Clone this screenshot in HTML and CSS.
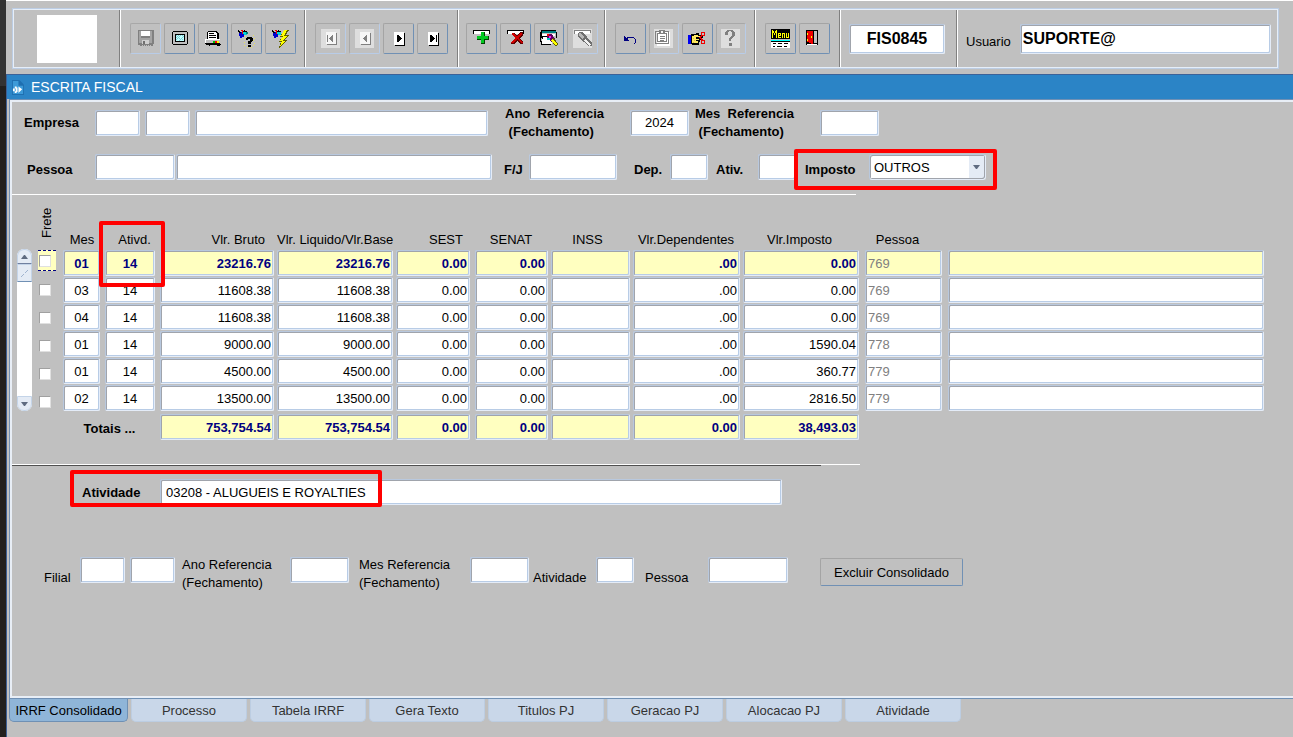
FILE: index.html
```html
<!DOCTYPE html>
<html lang="pt-br">
<head>
	<title>Escrita Fiscal - FIS0845</title>
	<meta charset="utf-8">
	<link rel="stylesheet" href="styles.css">
</head>
<body>
	<div class="edge"></div>
	<div class="app">
		<!--Toolbar-->
		<header class="toolbar">
			<div class="group logo-group"><div class="logo"></div></div>
			<div class="group file-group">
				<button class="tool off" title="Salvar">
					<svg viewBox="0 0 19 19"><path fill="#808080" d="M2 1h16v14h-1v2h-2v-1h-1v1h-1v-1h-1v1h-1v-1h-1v1H9v-1H8v1H7v-1H6v1H4v-1H2z"/><path fill="#a4a4a4" d="M3 2h2v7h9V2h2v12H3z"/><path fill="#fff" d="M5 2h9v5H5z"/><path fill="#d0d0d0" d="M6 11h7v4H6z"/><path fill="#707070" d="M7 12h2v3H7z"/></svg>
				</button>
				<button class="tool" title="Tela">
					<svg viewBox="0 0 19 19"><path fill="#000" d="M3 2h14v1h1v12h-1v1H3v-1H2V3h1z"/><path fill="#c0c0c0" d="M3 3h14v12H3z"/><path fill="#000" d="M5 5h10v8H5z"/><path fill="#c0ffff" d="M6 6h8v6H6z"/><path fill="#80d0d8" d="M6 6h1v1H6zm2 0h1v1H8zm2 0h1v1h-1zm2 0h1v1h-1zM7 7h1v1H7zm2 0h1v1H9zm4 0h1v1h-1zM6 8h1v1H6zm2 0h1v1H8zm4 0h1v1h-1zM7 9h1v1H7zm2 0h1v1H9zm2 0h1v1h-1zm-5 1h1v1H6zm4 0h1v1h-1zm2 0h1v1h-1zm-3 1h1v1H9z"/></svg>
				</button>
				<button class="tool" title="Imprimir">
					<svg viewBox="0 0 19 19"><path fill="#000" d="M5 2h9v1h1v1h1v6H4V3h1z"/><path fill="#fff" d="M5 3h8v1h1v6H5zM2 10h15v4H2z"/><path fill="#000" d="M6 4h5v1H6zm0 2h7v1H6zm0 2h7v1H6z"/><path fill="#c0c0c0" d="M3 11h14v4H3z"/><path fill="#00c000" d="M10 12h2v2h-2z"/><path fill="#f00" d="M12 12h2v2h-2z"/><path fill="#ff0" d="M14 12h2v2h-2z"/><path fill="#000" d="M17 10h1v5H3v1h3v1h1v-1h7v1h3v-1h1v-6zM2 14h15v1H2z"/></svg>
				</button>
				<button class="tool" title="Entrar consulta">
					<svg viewBox="0 0 19 19"><path fill="#0000d0" d="M2 3h3v1h2v4H5v1H3V7H2z"/><path fill="#000" d="M1 1h1v1h1v1h1v1H2V3H1zM6 2h1V1h1v1h2v1H6z"/><path fill="#00d8d8" d="M6 3h4v3H7V5H6z"/><path fill="#008080" d="M9 3h2v2H9z"/><path fill="#f00000" d="M4 1h2v1H4zm1 1h1v3H5z"/><path fill="#e8e060" d="M8 7h1v1H8zm8-1h1v1h-1zm1 3h1v1h-1zm-1 2h1v1h-1zm1 3h1v1h-1zm-1 2h1v1h-1zM7 10h1v1H7zm0 3h1v1H7zm0 3h1v1H7zm3 2h1v1h-1zm4 0h1v1h-1z"/><path fill="#000" d="M10 8h5v1h1v3h-1v1h-1v2h-3v-3h2v-2h-2v1H9V9h1zm1 8h3v2h-3z"/></svg>
				</button>
				<button class="tool" title="Executar consulta">
					<svg viewBox="0 0 19 19"><path fill="#0000d0" d="M2 3h3v1h2v4H5v1H3V7H2z"/><path fill="#000" d="M1 1h1v1h1v1h1v1H2V3H1zM6 2h1V1h1v1h2v1H6z"/><path fill="#00d8d8" d="M6 3h4v3H7V5H6z"/><path fill="#f00000" d="M4 1h2v1H4zm1 1h1v3H5z"/><path fill="#606000" d="M13 1h5l-3 5h3l-4 5h2L8 19l2-6H8l3-5H9z"/><path fill="#ff0" d="M13 1h3l-3 6h3l-4 5h2l-5 5 2-5H9l3-5h-2z"/></svg>
				</button>
			</div>
			<div class="group nav-group">
				<button class="tool off" title="Primeiro">
					<svg viewBox="0 0 19 19"><path fill="#dedede" d="M0 0h19v19H0z"/><path fill="#808080" d="M6 4h10v12H6z"/><path fill="#f6f6f6" d="M5 3h10v12H5z"/><path fill="#808080" d="M6 6h1v7H6zm5 0h1v7h-1v-1h-1v-1H9v-1H8V9h1V8h1V7h1z"/></svg>
				</button>
				<button class="tool off" title="Anterior">
					<svg viewBox="0 0 19 19"><path fill="#dedede" d="M0 0h19v19H0z"/><path fill="#808080" d="M6 4h10v12H6z"/><path fill="#f6f6f6" d="M5 3h10v12H5z"/><path fill="#808080" d="M11 6h1v7h-1v-1h-1v-1H9v-1H8V9h1V8h1V7h1z"/></svg>
				</button>
				<button class="tool" title="Proximo">
					<svg viewBox="0 0 19 19"><path fill="#000" d="M6 4h10v13H6z"/><path fill="#fff" d="M5 3h10v13H5z"/><path fill="#000" d="M8 6h2v1h1v1h1v1h1v1h-1v1h-1v1h-1v1H8z"/></svg>
				</button>
				<button class="tool" title="Ultimo">
					<svg viewBox="0 0 19 19"><path fill="#000" d="M6 4h10v13H6z"/><path fill="#fff" d="M5 3h10v13H5z"/><path fill="#000" d="M7 6h2v1h1v1h1v1h1v1h-1v1h-1v1H9v1H7zm6 0h1v7h-1z"/></svg>
				</button>
			</div>
			<div class="group edit-group">
				<button class="tool" title="Inserir">
					<svg viewBox="0 0 19 19"><path fill="#000" d="M1 1h17v4h-1V2H2v3H1z"/><path fill="#fff" d="M2 2h15v3H2z"/><path fill="#004000" d="M9 3h4v4h4v4h-4v4H9v-4H5V7h4z"/><path fill="#00c820" d="M9 3h3v4h4v3h-4v4H9v-4H5V7h4z"/></svg>
				</button>
				<button class="tool" title="Excluir">
					<svg viewBox="0 0 19 19"><path fill="#000" d="M1 1h17v4h-1V2H2v3H1z"/><path fill="#fff" d="M2 2h15v3H2z"/><path fill="#600000" d="M6 4h3l2 3 3-4h3v3l-3 3 3 4v2h-3l-3-3-3 3H5v-2l4-4-3-3z"/><path fill="#d00000" d="M6 4h2l3 4 3-4h2v1l-3 4 4 5h-2l-4-4-4 4H5l4-5-3-4z"/></svg>
				</button>
				<button class="tool" title="Bloquear">
					<svg viewBox="0 0 19 19"><path fill="#000" d="M2 1h15v2h1v6h-1V4H3v5H1V3h1z"/><path fill="#008080" d="M3 2h14v2H3z"/><path fill="#fff" d="M3 5h13v2H3zM3 8h10v7H3z"/><path fill="#000" d="M3 7h5v1H4v2H3zM1 9h1v3h1v3h9v1H2v-3H1z"/><path fill="#600060" d="M8 5h5l3 5-3 3-5-4z"/><path fill="#f00000" d="M8 5h2v2H8z"/><path fill="#ff20ff" d="M10 7h2v2h-2z"/><path fill="#00c8c8" d="M8 9h3v2H8z"/><path fill="#606000" d="M12 11l3-2 4 6-1 2h-2z"/><path fill="#ff0" d="M12 11l2-1 4 5-1 1h-1z"/></svg>
				</button>
				<button class="tool off" title="Limpar">
					<svg viewBox="0 0 19 19"><path fill="#dedede" d="M0 0h19v19H0z"/><path fill="#808080" d="M1 1h17v3h-1V3H3v2H1z"/><path fill="#fff" d="M2 2h15v3H2z"/><path fill="#707070" d="M6 3h4l9 11v3h-3L5 8V4z"/><path fill="#b8b8b8" d="M6 4l3 1 2 3-2 2-3-3z"/><path fill="#f0f0f0" d="M12 10l6 5-1 2-6-5z"/></svg>
				</button>
			</div>
			<div class="group misc-group">
				<button class="tool" title="Desfazer">
					<svg viewBox="0 0 19 19"><path fill="none" stroke="#000080" stroke-width="1" d="M5 10l3-2h4l2 2v4l-1 1"/><path fill="#000080" d="M3 7h1v1h1v1h1v1h1v1h1v1H3z"/></svg>
				</button>
				<button class="tool off" title="Lista">
					<svg viewBox="0 0 19 19"><path fill="#dedede" d="M0 0h19v19H0z"/><path fill="#fff" d="M3 3h13v14H3z"/><path fill="#808080" fill-rule="evenodd" d="M1 2h4V1h6v1h4v13H1zm1 1v11h12V3zM3 4h10v9H3zm1 1v7h8V5z"/><path fill="#808080" d="M5 2h6v3H5zM6 7h5v1H6zm0 2h5v1H6zm0 2h4v1H6z"/><path fill="#f4f4f4" d="M7 2h2v2H7z"/></svg>
				</button>
				<button class="tool" title="Editar">
					<svg viewBox="0 0 19 19"><path fill="#0000f0" d="M0 6h3v9H0z"/><path fill="#000" d="M3 5h5V4h3v2h4v3h-2v2h-1v2h-1v3H4v-1H3z"/><path fill="#ffe860" d="M4 7h2V6h4v1h4v1H8v2h3v1H8v1h2v2H4z"/><path fill="#d8c040" d="M5 9h1v1H5zm1 2h1v1H6zM5 13h1v1H5z"/><path fill="none" stroke="#f00000" d="M14 3h2v3h-3V4zm0 8h2v3h-3v-2zM11 9l4-3M12 8l3 4"/></svg>
				</button>
				<button class="tool off" title="Ajuda">
					<svg viewBox="0 0 19 19"><path fill="#dedede" d="M0 0h19v19H0z"/><path fill="#808080" d="M6 1h6v1h1v1h1v4h-1v1h-1v1h-1v1h-1v2H8V9h1V8h1V7h1V3h-1V2H8v1H7v3H4V3h1V2h1zm2 13h3v3H8z"/></svg>
				</button>
			</div>
			<div class="group menu-group">
				<button class="tool" title="Menu">
					<svg viewBox="0 0 19 19"><path fill="#000" d="M0 0h19v10H0z"/><path fill="#ff0" d="M1 1h1v1h1v2h1V2h1V1h1v8H5V4H4v2H3V4H2v5H1zm6 3h3v3H8v1h2v1H7zm1 1v1h1V5zm3-1h3v5h-1V5h-1v4h-1zm4 0h1v4h1V4h1v5h-3z"/><path fill="#00ffff" d="M0 11h19v1H0z"/><path fill="#fff" d="M0 13h19v6H0z"/><path fill="#000" d="M0 12h19v1H0zm2 2h3v1H2zm5 0h4v1H7zm6 0h4v1h-4zM2 17h2v1H2zm4 0h5v1H6zm7 0h3v1h-3z"/></svg>
				</button>
				<button class="tool" title="Sair">
					<svg viewBox="0 0 19 19"><path fill="#000" d="M1 1h12v15H1z"/><path fill="#c0c0c0" d="M9 2h3v12H9z"/><path fill="#fff" d="M2 15h10v1H2z"/><path fill="#f00000" d="M2 2h6v13H6v-1H4v-1H2z"/><path fill="#ff0" d="M2 4h1v2H2zm0 6h1v2H2zm4-3h1v2H6z"/></svg>
				</button>
			</div>
			<div class="group code-group">
				<input type="text" class="field code" value="FIS0845" aria-label="Programa">
			</div>
			<div class="group user-group">
				<label for="usuario">Usuario</label>
				<input type="text" class="field user" id="usuario" value="SUPORTE@">
			</div>
		</header>

		<!--Window-->
		<main class="window">
			<h1>
				<svg viewBox="0 0 13 16"><path fill="#1f6fb0" d="M0 0h8l5 5v11H0z"/><path fill="#3d9ad8" d="M1 1h6v5h5v9H1z"/><path fill="#1f6fb0" d="M8 1l4 4H8z"/><path fill="#fff" d="M3 7h2v1h1v5H5v1H3v-2H1v-3h2zm1 2H3v3h1zM7 7l4 3-4 4z"/></svg>
				ESCRITA FISCAL
			</h1>
			<div class="panel">
				<div class="row filter">
					<label class="l-first" for="empresa">Empresa</label>
					<input type="text" class="field w45 gap" id="empresa">
					<input type="text" class="field w45 gap" aria-label="Filial da empresa">
					<input type="text" class="field w293" aria-label="Nome da empresa">
					<label class="l-ano" for="ano">Ano  Referencia
 (Fechamento)</label>
					<input type="text" class="field w59 center" id="ano" value="2024">
					<label class="l-mes" for="mes">Mes  Referencia
 (Fechamento)</label>
					<input type="text" class="field w59" id="mes">
				</div>
				<div class="row filter second">
					<label class="l-first indent" for="pessoa">Pessoa</label>
					<input type="text" class="field w80" id="pessoa">
					<input type="text" class="field w316" aria-label="Nome da pessoa">
					<label class="l-fj" for="fj">F/J</label>
					<input type="text" class="field w88" id="fj">
					<label class="l-dep" for="dep">Dep.</label>
					<input type="text" class="field w38" id="dep">
					<label class="l-ativ" for="ativ">Ativ.</label>
					<input type="text" class="field w38" id="ativ">
					<div class="imposto">
						<label for="imposto">Imposto</label>
						<div class="combo">
							<select id="imposto"><option>OUTROS</option></select>
							<svg viewBox="0 0 7 4"><path fill="#5f6b80" d="M0 0h7L4 4H3z"/></svg>
						</div>
						<span class="mark"></span>
					</div>
				</div>
				<hr class="line">

				<!--Records-->
				<div class="records">
					<div class="scroll">
						<button class="up" aria-label="Subir"><svg viewBox="0 0 7 4"><path fill="#5f6b80" d="M3 0h1l3 4H0z"/></svg></button>
						<span class="thumb"><svg viewBox="0 0 7 7"><path fill="none" stroke="#a0b4d0" d="M0 7l3-3M4 3l3-3"/></svg></span>
						<button class="down" aria-label="Descer"><svg viewBox="0 0 7 4"><path fill="#5f6b80" d="M0 0h7L4 4H3z"/></svg></button>
					</div>
					<div class="frete">
						<span class="frete-title" id="frete">Frete</span>
						<div class="check current"><input type="checkbox" aria-labelledby="frete"></div>
						<div class="check"><input type="checkbox" aria-labelledby="frete"></div>
						<div class="check"><input type="checkbox" aria-labelledby="frete"></div>
						<div class="check"><input type="checkbox" aria-labelledby="frete"></div>
						<div class="check"><input type="checkbox" aria-labelledby="frete"></div>
						<div class="check"><input type="checkbox" aria-labelledby="frete"></div>
					</div>
					<table>
						<colgroup>
							<col class="c-mes"><col class="c-ativd"><col class="c-bruto"><col class="c-liquido"><col class="c-sest"><col class="c-senat"><col class="c-inss"><col class="c-dep"><col class="c-imp"><col class="c-pessoa"><col>
						</colgroup>
						<thead>
							<tr>
								<th>Mes</th>
								<th class="ativd">Ativd.<span class="mark"></span></th>
								<th class="right">Vlr. Bruto</th>
								<th>Vlr. Liquido/Vlr.Base</th>
								<th class="right">SEST</th>
								<th>SENAT</th>
								<th class="back">INSS</th>
								<th>Vlr.Dependentes</th>
								<th class="back">Vlr.Imposto</th>
								<th class="person">Pessoa</th>
								<th></th>
							</tr>
						</thead>
						<tbody>
							<tr class="current">
								<td><input type="text" class="field center" aria-label="Mes" value="01"></td>
								<td><input type="text" class="field center" aria-label="Ativd." value="14"></td>
								<td><input type="text" class="field" aria-label="Vlr. Bruto" value="23216.76"></td>
								<td><input type="text" class="field" aria-label="Vlr. Liquido" value="23216.76"></td>
								<td><input type="text" class="field" aria-label="SEST" value="0.00"></td>
								<td><input type="text" class="field" aria-label="SENAT" value="0.00"></td>
								<td><input type="text" class="field" aria-label="INSS"></td>
								<td><input type="text" class="field" aria-label="Vlr.Dependentes" value=".00"></td>
								<td><input type="text" class="field" aria-label="Vlr.Imposto" value="0.00"></td>
								<td><input type="text" class="field person" aria-label="Pessoa" value="769"></td>
								<td><input type="text" class="field" aria-label="Nome"></td>
							</tr>
							<tr>
								<td><input type="text" class="field center" aria-label="Mes" value="03"></td>
								<td><input type="text" class="field center" aria-label="Ativd." value="14"></td>
								<td><input type="text" class="field" aria-label="Vlr. Bruto" value="11608.38"></td>
								<td><input type="text" class="field" aria-label="Vlr. Liquido" value="11608.38"></td>
								<td><input type="text" class="field" aria-label="SEST" value="0.00"></td>
								<td><input type="text" class="field" aria-label="SENAT" value="0.00"></td>
								<td><input type="text" class="field" aria-label="INSS"></td>
								<td><input type="text" class="field" aria-label="Vlr.Dependentes" value=".00"></td>
								<td><input type="text" class="field" aria-label="Vlr.Imposto" value="0.00"></td>
								<td><input type="text" class="field person" aria-label="Pessoa" value="769"></td>
								<td><input type="text" class="field" aria-label="Nome"></td>
							</tr>
							<tr>
								<td><input type="text" class="field center" aria-label="Mes" value="04"></td>
								<td><input type="text" class="field center" aria-label="Ativd." value="14"></td>
								<td><input type="text" class="field" aria-label="Vlr. Bruto" value="11608.38"></td>
								<td><input type="text" class="field" aria-label="Vlr. Liquido" value="11608.38"></td>
								<td><input type="text" class="field" aria-label="SEST" value="0.00"></td>
								<td><input type="text" class="field" aria-label="SENAT" value="0.00"></td>
								<td><input type="text" class="field" aria-label="INSS"></td>
								<td><input type="text" class="field" aria-label="Vlr.Dependentes" value=".00"></td>
								<td><input type="text" class="field" aria-label="Vlr.Imposto" value="0.00"></td>
								<td><input type="text" class="field person" aria-label="Pessoa" value="769"></td>
								<td><input type="text" class="field" aria-label="Nome"></td>
							</tr>
							<tr>
								<td><input type="text" class="field center" aria-label="Mes" value="01"></td>
								<td><input type="text" class="field center" aria-label="Ativd." value="14"></td>
								<td><input type="text" class="field" aria-label="Vlr. Bruto" value="9000.00"></td>
								<td><input type="text" class="field" aria-label="Vlr. Liquido" value="9000.00"></td>
								<td><input type="text" class="field" aria-label="SEST" value="0.00"></td>
								<td><input type="text" class="field" aria-label="SENAT" value="0.00"></td>
								<td><input type="text" class="field" aria-label="INSS"></td>
								<td><input type="text" class="field" aria-label="Vlr.Dependentes" value=".00"></td>
								<td><input type="text" class="field" aria-label="Vlr.Imposto" value="1590.04"></td>
								<td><input type="text" class="field person" aria-label="Pessoa" value="778"></td>
								<td><input type="text" class="field" aria-label="Nome"></td>
							</tr>
							<tr>
								<td><input type="text" class="field center" aria-label="Mes" value="01"></td>
								<td><input type="text" class="field center" aria-label="Ativd." value="14"></td>
								<td><input type="text" class="field" aria-label="Vlr. Bruto" value="4500.00"></td>
								<td><input type="text" class="field" aria-label="Vlr. Liquido" value="4500.00"></td>
								<td><input type="text" class="field" aria-label="SEST" value="0.00"></td>
								<td><input type="text" class="field" aria-label="SENAT" value="0.00"></td>
								<td><input type="text" class="field" aria-label="INSS"></td>
								<td><input type="text" class="field" aria-label="Vlr.Dependentes" value=".00"></td>
								<td><input type="text" class="field" aria-label="Vlr.Imposto" value="360.77"></td>
								<td><input type="text" class="field person" aria-label="Pessoa" value="779"></td>
								<td><input type="text" class="field" aria-label="Nome"></td>
							</tr>
							<tr>
								<td><input type="text" class="field center" aria-label="Mes" value="02"></td>
								<td><input type="text" class="field center" aria-label="Ativd." value="14"></td>
								<td><input type="text" class="field" aria-label="Vlr. Bruto" value="13500.00"></td>
								<td><input type="text" class="field" aria-label="Vlr. Liquido" value="13500.00"></td>
								<td><input type="text" class="field" aria-label="SEST" value="0.00"></td>
								<td><input type="text" class="field" aria-label="SENAT" value="0.00"></td>
								<td><input type="text" class="field" aria-label="INSS"></td>
								<td><input type="text" class="field" aria-label="Vlr.Dependentes" value=".00"></td>
								<td><input type="text" class="field" aria-label="Vlr.Imposto" value="2816.50"></td>
								<td><input type="text" class="field person" aria-label="Pessoa" value="779"></td>
								<td><input type="text" class="field" aria-label="Nome"></td>
							</tr>
						</tbody>
						<tfoot>
							<tr class="current">
								<th colspan="2">Totais ...</th>
								<td><input type="text" class="field" aria-label="Total Bruto" value="753,754.54"></td>
								<td><input type="text" class="field" aria-label="Total Liquido" value="753,754.54"></td>
								<td><input type="text" class="field" aria-label="Total SEST" value="0.00"></td>
								<td><input type="text" class="field" aria-label="Total SENAT" value="0.00"></td>
								<td><input type="text" class="field" aria-label="Total INSS"></td>
								<td><input type="text" class="field" aria-label="Total Dependentes" value="0.00"></td>
								<td><input type="text" class="field" aria-label="Total Imposto" value="38,493.03"></td>
								<td></td>
								<td></td>
							</tr>
						</tfoot>
					</table>
				</div>
				<hr class="line bottom">
				<hr class="line dark">

				<div class="row activity">
					<label for="atividade">Atividade</label>
					<input type="text" class="field" id="atividade" value="03208 - ALUGUEIS E ROYALTIES">
					<span class="mark"></span>
				</div>

				<!--Delete consolidated-->
				<div class="row delete">
					<label class="low d-filial" for="d-filial">Filial</label>
					<input type="text" class="field w45 gap" id="d-filial">
					<input type="text" class="field w45" aria-label="Filial 2">
					<label class="d-ano" for="d-ano">Ano Referencia
(Fechamento)</label>
					<input type="text" class="field w59" id="d-ano">
					<label class="d-mes" for="d-mes">Mes Referencia
(Fechamento)</label>
					<input type="text" class="field w59" id="d-mes">
					<label class="low d-ativ" for="d-ativ">Atividade</label>
					<input type="text" class="field w38" id="d-ativ">
					<label class="low d-pessoa" for="d-pessoa">Pessoa</label>
					<input type="text" class="field w80" id="d-pessoa">
					<button class="remove">Excluir Consolidado</button>
				</div>
			</div>
			<nav class="tabs">
				<button class="active">IRRF Consolidado</button>
				<button>Processo</button>
				<button>Tabela IRRF</button>
				<button>Gera Texto</button>
				<button>Titulos PJ</button>
				<button>Geracao PJ</button>
				<button>Alocacao PJ</button>
				<button>Atividade</button>
			</nav>
		</main>
	</div>
</body>
</html>
```

FILE: styles.css
```css
*{
	box-sizing: border-box;
}

body{
	display: flex;
	min-height: 100vh;
	margin: 0;
	background: #c0c0c0;
	color: #000;
}

body, input, select, button{
	font-family: "Liberation Sans", Arial, sans-serif;
	font-size: 13px;
}

button{
	padding: 0;
}

.edge{
	flex: none;
	width: 6px;
	background: linear-gradient(#333 86px, #22201e 86px);
}

.app{
	flex: 1;
	min-width: 0;
	display: flex;
	flex-direction: column;
	border-top: 1px solid #fff;
}

/* toolbar */
.toolbar{
	display: flex;
	height: 61px;
	margin: 7px 14px 5px 6px;
	border: 1px solid #bccde4;
	box-shadow: inset 0 0 0 1px #e6eef8;
	padding: 1px;
}

.group{
	display: flex;
	align-items: center;
	gap: 3px;
	flex: none;
	padding: 0 9px;
	border-right: 1px solid #fff;
	box-shadow: inset -1px 0 #808080;
}

.logo-group{
	width: 107px;
	justify-content: center;
}

.logo{
	width: 60px;
	height: 48px;
	background: #fff;
}

.file-group{
	width: 185px;
}

.nav-group{
	width: 153px;
}

.edit-group{
	width: 147px;
	padding: 0 7px;
}

.misc-group{
	width: 150px;
}

.menu-group{
	width: 85px;
}

.code-group{
	width: 117px;
	padding: 0 12px 0 8px;
}

.user-group{
	flex: 1;
	min-width: 0;
	gap: 9px;
	padding: 0 6px 0 8px;
	border: none;
	box-shadow: none;
}

.user-group label{
	padding-top: 5px;
}

.tool{
	display: flex;
	align-items: center;
	justify-content: center;
	width: 31px;
	height: 31px;
	background: #c0c0c0;
	border: 1px solid;
	border-color: #a4a4a4 #7090b4 #7090b4 #a4a4a4;
	border-radius: 2px;
}

.tool.off{
	border-color: #a8a8a8 #b8cce8 #b8cce8 #a8a8a8;
}

.tool svg{
	width: 19px;
	height: 19px;
	shape-rendering: crispEdges;
}

/* text fields */
.field{
	flex: none;
	height: 26px;
	padding: 0 2px;
	background: #fff;
	border: 1px solid;
	border-color: #b8c8de #e4ecf8 #e4ecf8 #b8c8de;
	border-radius: 2px;
	box-shadow: inset 1px 1px #a0a4ac, inset -1px -1px #b8cce6;
	color: #000;
	outline: none;
}

.field.center{
	text-align: center;
}

.field.code, .field.user{
	height: 30px;
	font-size: 16px;
	font-weight: bold;
}

.field.code{
	width: 96px;
	text-align: center;
}

.field.user{
	flex: 1;
	min-width: 0;
}

.w38{ width: 38px; }
.w45{ width: 45px; }
.w59{ width: 59px; }
.w80{ width: 80px; }
.w88{ width: 88px; }
.w293{ width: 293px; }
.w316{ width: 316px; }

.gap{
	margin-right: 5px;
}

/* window */
.window{
	flex: 1;
	display: flex;
	flex-direction: column;
	border-left: 1px solid #3c5f94;
}

h1{
	display: flex;
	align-items: center;
	gap: 7px;
	height: 25px;
	margin: 0;
	padding-left: 5px;
	background: #2b84c6;
	border-top: 1px solid #3c6298;
	color: #fff;
	font-size: 14px;
	font-weight: normal;
}

h1 svg{
	width: 12px;
	height: 15px;
}

.panel{
	flex: 1;
	margin-left: 2px;
	border: 1px solid #7090b4;
	border-right: none;
	box-shadow: inset 2px 2px #e8eef6, inset 0 -2px #e8eef6;
	padding: 4px 0 3px 2px;
}

.row{
	display: flex;
	align-items: center;
	padding-left: 12px;
}

.row label{
	flex: none;
	line-height: 18px;
	white-space: pre;
}

.filter label, .activity label{
	padding-top: 1px;
	font-weight: bold;
}

.filter.second{
	height: 26px;
	margin-top: 13px;
}

.second label{
	padding-top: 5px;
}

.l-first{ width: 71px; }
.l-first.indent{ padding-left: 3px; }
.l-ano{ width: 142px; padding-left: 17px; }
.l-mes{ width: 131px; padding-left: 6px; }
.l-fj{ width: 37px; padding-left: 12px; }
.l-dep{ width: 53px; padding-left: 17px; }
.l-ativ{ width: 50px; padding-left: 8px; }

#pessoa{
	margin-right: 1px;
}

.imposto{
	position: relative;
	display: flex;
	align-items: center;
	padding-left: 9px;
}

.imposto label{
	width: 64px;
}

.combo{
	position: relative;
}

.combo select{
	appearance: none;
	display: block;
	width: 117px;
	height: 26px;
	padding: 0 20px 0 4px;
	background: linear-gradient(90deg, #fff 99px, #e4ebf5 99px);
	border: 1px solid;
	border-color: #b8c8de #e4ecf8 #e4ecf8 #b8c8de;
	border-radius: 3px;
	box-shadow: inset 1px 1px #a0a4ac, inset -1px -1px #a0a4ac;
	color: #000;
}

.combo svg{
	position: absolute;
	right: 6px;
	top: 11px;
	width: 7px;
	height: 4px;
}

/* red highlight */
.mark{
	position: absolute;
	border: 4px solid #f00;
	border-radius: 2px;
	pointer-events: none;
}

.imposto .mark{
	inset: -5px -11px -10px -2px;
}

.line{
	width: 844px;
	height: 1px;
	margin: 14px 0 0;
	border: none;
	background: #fff;
}

.line.bottom{
	width: 848px;
	margin-top: 24px;
}

.line.dark{
	width: 809px;
	margin-top: 0;
	background: #505050;
}

/* records */
.records{
	display: flex;
	padding: 0 29px 0 5px;
}

.scroll{
	display: flex;
	flex-direction: column;
	flex: none;
	width: 15px;
	height: 162px;
	margin: 54px 6px 0 0;
	background: #fff;
	border-radius: 7px;
}

.scroll button{
	display: flex;
	align-items: center;
	justify-content: center;
	height: 15px;
	background: #e4ebf5;
	border: 1px solid #c4d4e8;
}

.scroll button svg{
	width: 7px;
	height: 4px;
}

.scroll .up{
	border-radius: 7px 7px 0 0;
	border-bottom-color: #7080a0;
}

.scroll .down{
	margin-top: auto;
	border-radius: 0 0 7px 7px;
}

.thumb{
	display: flex;
	align-items: center;
	justify-content: center;
	height: 18px;
	background: #e4ebf5;
	border: 1px solid #c4d4e8;
	border-bottom-color: #7090b4;
}

.thumb svg{
	width: 7px;
	height: 7px;
}

.frete{
	flex: none;
	width: 25px;
}

.frete-title{
	display: flex;
	align-items: center;
	width: 17px;
	height: 55px;
	padding-top: 12px;
	writing-mode: vertical-rl;
	transform: rotate(180deg);
}

.check{
	display: flex;
	align-items: center;
	width: 18px;
	height: 21px;
	padding-left: 1px;
	margin-bottom: 7px;
}

.check.current{
	background: #ffffc0;
	border-top: 1px dashed #000080;
	border-bottom: 1px dashed #000080;
	margin-bottom: 8px;
}

.check input{
	appearance: none;
	width: 12px;
	height: 12px;
	margin: 0;
	background: #fff;
	border: 1px solid;
	border-color: #a0a0a0 #e0e0e0 #e0e0e0 #a0a0a0;
}

table{
	flex: 1;
	width: 0;
	table-layout: fixed;
	border-collapse: collapse;
}

.c-mes{ width: 42px; }
.c-ativd{ width: 55px; }
.c-bruto{ width: 117px; }
.c-liquido{ width: 119px; }
.c-sest{ width: 79px; }
.c-senat{ width: 76px; }
.c-inss{ width: 82px; }
.c-dep{ width: 110px; }
.c-imp{ width: 122px; }
.c-pessoa{ width: 83px; }

th{
	height: 55px;
	padding: 0 4px 3px 0;
	font-weight: normal;
	line-height: 15px;
	vertical-align: bottom;
	white-space: nowrap;
}

th.right{
	padding-right: 12px;
	text-align: right;
}

th.back{
	padding-right: 9px;
}

th.person{
	padding-right: 18px;
}

th.ativd{
	position: relative;
	padding-left: 8px;
}

.ativd .mark{
	inset: 26px -5px -37px -6px;
}

td{
	padding: 0 3px 1px 0;
}

td:nth-child(1), td:nth-child(2), td:nth-child(5){
	padding-right: 5px;
}

td:nth-child(9), td:nth-child(10){
	padding-right: 6px;
}

td:last-child{
	padding-right: 0;
}

td .field{
	display: block;
	width: 100%;
	text-align: right;
}

.current .field{
	background: #ffffc0;
	color: #000080;
	font-weight: bold;
}

td .field.center{
	text-align: center;
}

td .field.person{
	color: #808080;
	font-weight: normal;
	text-align: left;
}

tfoot th{
	height: auto;
	padding-top: 8px;
	font-weight: bold;
	vertical-align: middle;
}

tfoot td, tfoot td:nth-child(n){
	padding: 2px 3px 0 0;
}

tfoot td:nth-child(4){
	padding-right: 5px;
}

tfoot td:nth-child(8){
	padding-right: 6px;
}

/* activity */
.activity{
	position: relative;
	margin-top: 13px;
}

.activity label{
	width: 136px;
	padding-left: 58px;
}

.activity .field{
	width: 622px;
	padding-left: 5px;
}

.activity .mark{
	left: 58px;
	top: -9px;
	width: 312px;
	height: 37px;
}

/* delete */
.delete{
	align-items: flex-start;
	margin-top: 51px;
}

.delete .field{
	margin-top: 1px;
}

.delete .low{
	padding-top: 13px;
}

.delete .d-filial{ width: 56px; padding-left: 20px; }
.d-ano{ width: 115px; padding-left: 7px; }
.d-mes{ width: 121px; padding-left: 10px; }
.delete .d-ativ{ width: 67px; padding-left: 4px; }
.delete .d-pessoa{ width: 74px; padding-left: 11px; }

.remove{
	width: 143px;
	height: 28px;
	margin: 2px 0 0 32px;
	background: #c0c0c0;
	border: 1px solid;
	border-color: #a4a4a4 #7090b4 #7090b4 #a4a4a4;
	border-radius: 2px;
}

/* tabs */
.tabs{
	display: flex;
	gap: 3px;
	padding: 0 0 15px 2px;
}

.tabs button{
	width: 116px;
	height: 23px;
	background: #c9d7e9;
	border: 1px solid #bccde2;
	border-top: none;
	border-radius: 0 0 5px 5px;
	color: #333;
}

.tabs .active{
	width: 119px;
	background: #8fb5d8;
	border-color: #6f90b4;
	color: #000;
}
```
